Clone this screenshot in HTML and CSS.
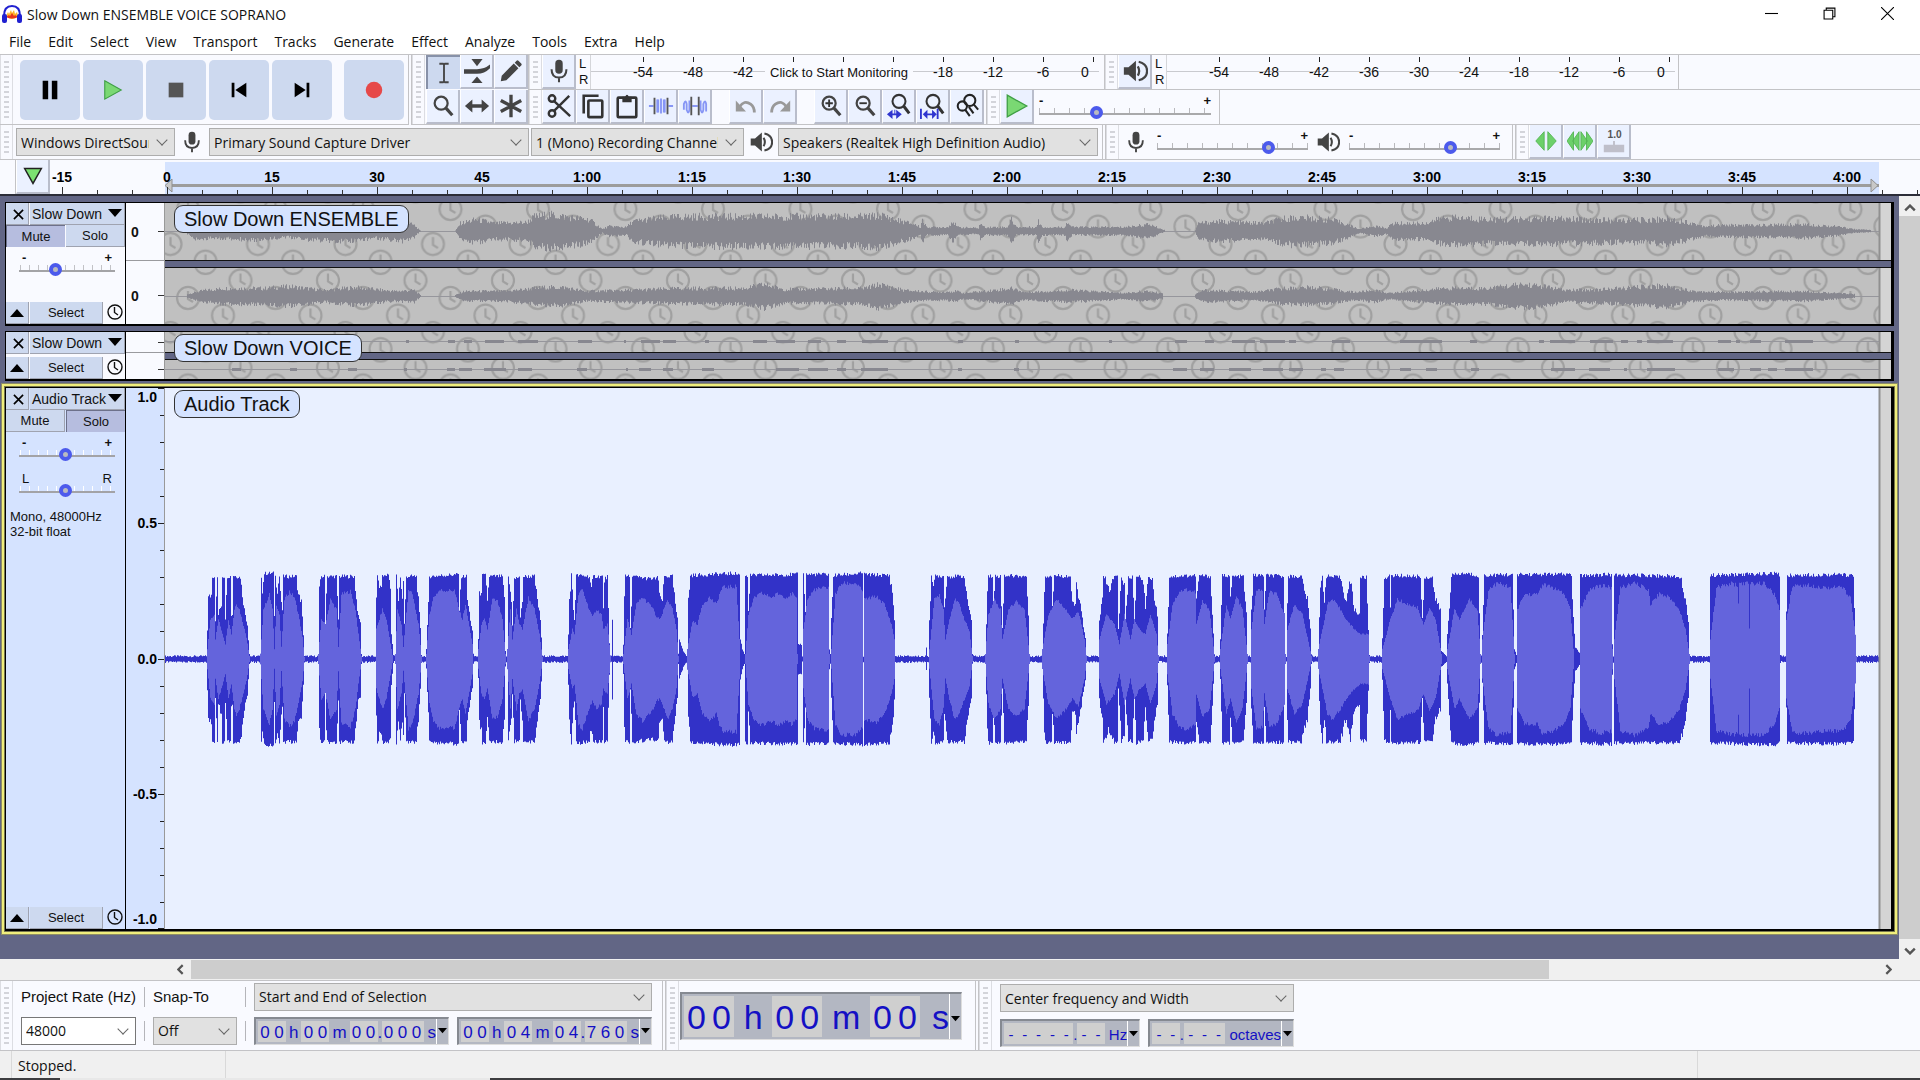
FILE: index.html
```
<!DOCTYPE html>
<html lang="en">
<head>
<meta charset="UTF-8">
<meta name="viewport" content="width=device-width, initial-scale=1">
<title>Slow Down ENSEMBLE VOICE SOPRANO</title>
<link rel="stylesheet" href="styles.css">
</head>
<body>

<!-- icon sprite -->
<svg class="sprite" aria-hidden="true">
  <symbol id="i-pause" viewBox="0 0 24 24"><path d="M4 2h6v20H4zM14 2h6v20h-6z" fill="#000"/></symbol>
  <symbol id="i-play" viewBox="0 0 24 24"><path d="M3 2L21 12 3 22z" fill="#7ad873" stroke="#3f9f45" stroke-width="1.2"/></symbol>
  <symbol id="i-stop" viewBox="0 0 24 24"><path d="M4 4h16v16H4z" fill="#555"/></symbol>
  <symbol id="i-start" viewBox="0 0 24 24"><path d="M4 4h3v16H4zM20 4v16L8 12z" fill="#000"/></symbol>
  <symbol id="i-end" viewBox="0 0 24 24"><path d="M17 4h3v16h-3zM4 4l12 8L4 20z" fill="#000"/></symbol>
  <symbol id="i-record" viewBox="0 0 24 24"><circle cx="12" cy="12" r="9" fill="#e64949"/></symbol>
  <symbol id="i-ibeam" viewBox="0 0 28 28"><path d="M9 4h4l1 1 1-1h4M9 24h4l1-1 1 1h4M14 5v18" fill="none" stroke="#444" stroke-width="2"/></symbol>
  <symbol id="i-envelope" viewBox="0 0 28 28"><path d="M8 1h12l-6 8zM8 27h12l-6-7zM0 12h14q8 0 14-5v4q-6 6-14 6H0z" fill="#444"/></symbol>
  <symbol id="i-pencil" viewBox="0 0 28 28"><path d="M4 19L17 6l5 5L9 24l-6 1zM18 5l2-2q1-1 2 0l3 3q1 1 0 2l-2 2z" fill="#444"/></symbol>
  <symbol id="i-zoom" viewBox="0 0 28 28"><circle cx="12" cy="11" r="7" fill="none" stroke="#444" stroke-width="2.4"/><path d="M17 16l7 8" stroke="#444" stroke-width="3.4"/></symbol>
  <symbol id="i-shift" viewBox="0 0 28 28"><path d="M1 14l8-7v5h10V7l8 7-8 7v-5H9v5z" fill="#444"/></symbol>
  <symbol id="i-multi" viewBox="0 0 28 28"><path d="M14 2v24M3 8l22 12M25 8L3 20" stroke="#444" stroke-width="3.6"/></symbol>
  <symbol id="i-mic" viewBox="0 0 28 28"><rect x="10" y="2" width="8" height="15" rx="4" fill="#444"/><path d="M6 12q0 9 8 9t8-9M14 21v5" fill="none" stroke="#444" stroke-width="2.2"/></symbol>
  <symbol id="i-speaker" viewBox="0 0 28 28"><path d="M2 10h5l8-7v22l-8-7H2z" fill="#444"/><path d="M17 9q3 5 0 10M18 4q9 2 9 10t-9 10" fill="none" stroke="#444" stroke-width="2.4"/></symbol>
  <symbol id="i-cut" viewBox="0 0 28 28"><g fill="none" stroke="#333" stroke-width="2.6"><circle cx="6.5" cy="6" r="3.5"/><circle cx="6.5" cy="22" r="3.5"/><path d="M9 9l17 16M9 19L25 3"/></g></symbol>
  <symbol id="i-copy" viewBox="0 0 28 28"><g fill="none" stroke="#333" stroke-width="2.8"><rect x="9" y="8" width="15" height="18" rx="1"/><path d="M4 22V3h16"/></g></symbol>
  <symbol id="i-paste" viewBox="0 0 28 28"><rect x="4" y="5" width="20" height="21" rx="1" fill="none" stroke="#333" stroke-width="2.8"/><path d="M9 4h3q2-4 4 0h3v6H9z" fill="#333"/></symbol>
  <symbol id="i-trim" viewBox="0 0 28 28"><path d="M1 14h5M22 14h5M11 7v14M14 6v16M17 7v14" stroke="#8796f5" stroke-width="2"/><path d="M7 5v18M21 5v18" stroke="#555" stroke-width="2"/><path d="M9 7h2v14H9zM17 7h2v14h-2z" fill="#8796f5"/></symbol>
  <symbol id="i-silence" viewBox="0 0 28 28"><path d="M2 18v-6q2-6 3 0v6q2 6 3 0V8M20 8v10q2 6 3 0v-6q2-6 3 0v8M11 14h6" fill="none" stroke="#8796f5" stroke-width="2"/><path d="M10 4v20M18 4v20" stroke="#555" stroke-width="2"/></symbol>
  <symbol id="i-undo" viewBox="0 0 28 28"><path d="M7 15q5-8 12-3 4 3 4 9" fill="none" stroke="#999" stroke-width="3"/><path d="M3 8v12h11z" fill="#999"/></symbol>
  <symbol id="i-zoomin" viewBox="0 0 28 28"><use href="#i-zoom"/><path d="M8 11h8M12 7v8" stroke="#333" stroke-width="2"/></symbol>
  <symbol id="i-zoomout" viewBox="0 0 28 28"><use href="#i-zoom"/><path d="M8 11h8" stroke="#333" stroke-width="2"/></symbol>
  <symbol id="i-zoomsel" viewBox="0 0 28 28"><circle cx="14" cy="9" r="7" fill="none" stroke="#333" stroke-width="2.2"/><path d="M19 14l6 8" stroke="#333" stroke-width="3.2"/><path d="M1 23l6-5v4h2v-4h1v4h1v-4l6 5-6 5v-4H7v4z" fill="#2f35cf"/></symbol>
  <symbol id="i-zoomfit" viewBox="0 0 28 28"><circle cx="14" cy="9" r="7" fill="none" stroke="#333" stroke-width="2.2"/><path d="M19 14l6 8" stroke="#333" stroke-width="3.2"/><path d="M0 17h2v11H0zM18 17h2v11h-2zM3 23l5-5v4h5v-4l5 5-5 5v-4H8v4z" fill="#2f35cf"/></symbol>
  <symbol id="i-zoomtog" viewBox="0 0 28 28"><g fill="none" stroke="#222" stroke-width="2.2"><circle cx="17" cy="8" r="6"/><circle cx="9" cy="14" r="5"/><path d="M21 12l5 6M16 15l5 7M12 18l5 7"/></g></symbol>
  <symbol id="i-clock" viewBox="0 0 16 16"><circle cx="8" cy="8" r="7" fill="none" stroke="#111" stroke-width="1.4"/><path d="M7.5 3v5.5L11 11" fill="none" stroke="#111" stroke-width="1.4"/></symbol>
  <symbol id="i-up" viewBox="0 0 14 9"><path d="M0 9L7 1l7 8z"/></symbol>
  <symbol id="i-down" viewBox="0 0 14 9"><path d="M0 0h14L7 8z"/></symbol>
  <symbol id="i-x" viewBox="0 0 12 12"><path d="M1 1l10 10M11 1L1 11" stroke="#000" stroke-width="1.8"/></symbol>
</svg>

<header class="titlebar">
  <svg class="logo" viewBox="0 0 20 18"><path d="M4 11l2-4 1 2 2-4 1 3 2-3 1 4 2-2 1 4q-6 6-12 0z" fill="#ffb52a"/><path d="M4 12l3-2 1 1 2-3 2 3 1-1 3 2q-6 3-12 0z" fill="#e8341c"/><path d="M2 11Q2 1 10 1t8 10" fill="none" stroke="#2020d0" stroke-width="2"/><rect x="0" y="9" width="5" height="9" rx="2" fill="#2020d0"/><rect x="15" y="9" width="5" height="9" rx="2" fill="#2020d0"/></svg>
  <h1>Slow Down ENSEMBLE VOICE SOPRANO</h1>
  <div class="window-buttons">
    <button aria-label="Minimize"><svg viewBox="0 0 12 12"><path d="M0 6h12" stroke="#000"/></svg></button>
    <button aria-label="Restore"><svg viewBox="0 0 12 12"><path d="M1 3h8v8H1zM3 3V1h8v8H9" fill="none" stroke="#000"/></svg></button>
    <button aria-label="Close"><svg viewBox="0 0 12 12"><path d="M0 0l12 12M12 0L0 12" stroke="#000"/></svg></button>
  </div>
</header>

<nav class="menubar">
  <button>File</button><button>Edit</button><button>Select</button><button>View</button><button>Transport</button><button>Tracks</button><button>Generate</button><button>Effect</button><button>Analyze</button><button>Tools</button><button>Extra</button><button>Help</button>
</nav>

<section class="dock">
  <div class="dock-top">
    <div class="bar">
      <i class="grip"></i>
      <div class="transport">
        <button aria-label="Pause"><svg><use href="#i-pause"/></svg></button>
        <button aria-label="Play"><svg><use href="#i-play"/></svg></button>
        <button aria-label="Stop"><svg><use href="#i-stop"/></svg></button>
        <button aria-label="Skip to Start"><svg><use href="#i-start"/></svg></button>
        <button aria-label="Skip to End"><svg><use href="#i-end"/></svg></button>
        <button class="record" aria-label="Record"><svg><use href="#i-record"/></svg></button>
      </div>
    </div>
    <div class="bar">
      <i class="grip"></i>
      <div class="tools">
        <button class="tool on" aria-label="Selection"><svg><use href="#i-ibeam"/></svg></button>
        <button class="tool" aria-label="Envelope"><svg><use href="#i-envelope"/></svg></button>
        <button class="tool" aria-label="Draw"><svg><use href="#i-pencil"/></svg></button>
        <button class="tool" aria-label="Zoom"><svg><use href="#i-zoom"/></svg></button>
        <button class="tool" aria-label="Time Shift"><svg><use href="#i-shift"/></svg></button>
        <button class="tool" aria-label="Multi"><svg><use href="#i-multi"/></svg></button>
      </div>
    </div>
    <div class="dock-rows">
      <div class="dock-row">
        <div class="bar">
          <i class="grip"></i>
          <button class="tool" aria-label="Record Meter"><svg><use href="#i-mic"/></svg></button>
          <div class="lr"><span>L</span><span>R</span></div>
          <div class="meter">
            <span>-54</span><span>-48</span><span>-42</span><span></span><span></span><span></span><span>-18</span><span>-12</span><span>-6</span><span>0</span>
            <button class="monitor">Click to Start Monitoring</button>
          </div>
        </div>
        <div class="bar">
          <i class="grip"></i>
          <button class="tool" aria-label="Playback Meter"><svg><use href="#i-speaker"/></svg></button>
          <div class="lr"><span>L</span><span>R</span></div>
          <div class="meter">
            <span>-54</span><span>-48</span><span>-42</span><span>-36</span><span>-30</span><span>-24</span><span>-18</span><span>-12</span><span>-6</span><span>0</span>
          </div>
        </div>
      </div>
      <div class="dock-row">
        <div class="bar">
          <i class="grip"></i>
          <button class="tool" aria-label="Cut"><svg><use href="#i-cut"/></svg></button>
          <button class="tool" aria-label="Copy"><svg><use href="#i-copy"/></svg></button>
          <button class="tool" aria-label="Paste"><svg><use href="#i-paste"/></svg></button>
          <button class="tool" aria-label="Trim"><svg><use href="#i-trim"/></svg></button>
          <button class="tool" aria-label="Silence"><svg><use href="#i-silence"/></svg></button>
          <button class="tool apart" aria-label="Undo"><svg><use href="#i-undo"/></svg></button>
          <button class="tool redo" aria-label="Redo"><svg><use href="#i-undo"/></svg></button>
          <button class="tool apart" aria-label="Zoom In"><svg><use href="#i-zoomin"/></svg></button>
          <button class="tool" aria-label="Zoom Out"><svg><use href="#i-zoomout"/></svg></button>
          <button class="tool" aria-label="Fit Selection"><svg><use href="#i-zoomsel"/></svg></button>
          <button class="tool" aria-label="Fit Project"><svg><use href="#i-zoomfit"/></svg></button>
          <button class="tool" aria-label="Zoom Toggle"><svg><use href="#i-zoomtog"/></svg></button>
        </div>
        <div class="bar speed">
          <i class="grip"></i>
          <button class="tool" aria-label="Play-at-Speed"><svg><use href="#i-play"/></svg></button>
          <div class="slider wide"><span>-</span><span>+</span><input type="range" aria-label="Playback Speed" min="0" max="100" value="32"></div>
        </div>
      </div>
    </div>
  </div>

  <div class="dock-row devices">
    <div class="bar device-bar">
      <i class="grip"></i>
      <div class="pick host"><select aria-label="Audio Host"><option>Windows DirectSound</option></select></div>
      <svg class="glyph"><use href="#i-mic"/></svg>
      <div class="pick device"><select aria-label="Recording Device"><option>Primary Sound Capture Driver</option></select></div>
      <div class="pick channels"><select aria-label="Recording Channels"><option>1 (Mono) Recording Channel</option></select></div>
      <svg class="glyph"><use href="#i-speaker"/></svg>
      <div class="pick device"><select aria-label="Playback Device"><option>Speakers (Realtek High Definition Audio)</option></select></div>
    </div>
    <div class="bar mixer">
      <i class="grip"></i>
      <svg class="glyph"><use href="#i-mic"/></svg>
      <div class="slider"><span>-</span><span>+</span><input type="range" aria-label="Recording Volume" min="0" max="100" value="76"></div>
      <svg class="glyph"><use href="#i-speaker"/></svg>
      <div class="slider"><span>-</span><span>+</span><input type="range" aria-label="Playback Volume" min="0" max="100" value="69"></div>
    </div>
    <div class="bar scrub">
      <i class="grip"></i>
      <button class="tool" aria-label="Scrub"><svg viewBox="0 0 28 28"><path d="M12 4v20L3 14zM16 4v20l9-10z" fill="#6cd06a" stroke="#55b555"/></svg></button>
      <button class="tool" aria-label="Seek"><svg viewBox="0 0 28 28"><path d="M7 4v20L0 14zM13 4v20L6 14zM15 4v20l7-10zM21 4v20l7-10z" fill="#6cd06a" stroke="#55b555"/></svg></button>
      <button class="tool" aria-label="Scrub Ruler"><svg viewBox="0 0 28 28"><path d="M3 18h22v8H3zM13 14h2v5h-2z" fill="#bfbfca"/><text x="7" y="11" class="tiny">1.0</text></svg></button>
    </div>
  </div>
</section>

<div class="timeline">
  <i class="timeline-edge"></i>
  <button class="tool pin" aria-label="Pin Play Head"><svg viewBox="0 0 28 28"><path d="M5 6h18l-9 16z" fill="#7be071" stroke="#222" stroke-width="1.6"/></svg></button>
  <svg class="ruler" id="ruler"></svg>
</div>

<main class="workspace">
  <div class="tracks">
    <article class="track muted ensemble">
      <div class="panel">
        <div class="panel-head"><button class="close" aria-label="Close"><svg><use href="#i-x"/></svg></button><button class="name">Slow Down<svg><use href="#i-down"/></svg></button></div>
        <div class="panel-mute"><button class="on">Mute</button><button>Solo</button></div>
        <div class="slider gain"><span>-</span><span>+</span><input type="range" aria-label="Gain" min="0" max="100" value="36"></div>
        <div class="panel-foot"><button class="fold" aria-label="Collapse"><svg><use href="#i-up"/></svg></button><button class="select">Select</button><svg class="sync"><use href="#i-clock"/></svg></div>
      </div>
      <div class="scale"><div><b>0</b></div><div><b>0</b></div></div>
      <div class="clip">
        <svg class="wave" data-wave="ensembleL"></svg>
        <svg class="wave" data-wave="ensembleR"></svg>
        <span class="clip-name">Slow Down ENSEMBLE</span>
      </div>
    </article>

    <article class="track muted voice">
      <div class="panel">
        <div class="panel-head"><button class="close" aria-label="Close"><svg><use href="#i-x"/></svg></button><button class="name">Slow Down<svg><use href="#i-down"/></svg></button></div>
        <div class="panel-foot"><button class="fold" aria-label="Collapse"><svg><use href="#i-up"/></svg></button><button class="select">Select</button><svg class="sync"><use href="#i-clock"/></svg></div>
      </div>
      <div class="scale"><div></div><div></div></div>
      <div class="clip">
        <svg class="wave" data-wave="voiceL"></svg>
        <svg class="wave" data-wave="voiceR"></svg>
        <span class="clip-name">Slow Down VOICE</span>
      </div>
    </article>

    <article class="track focused">
      <div class="panel">
        <div class="panel-head"><button class="close" aria-label="Close"><svg><use href="#i-x"/></svg></button><button class="name">Audio Track<svg><use href="#i-down"/></svg></button></div>
        <div class="panel-mute"><button>Mute</button><button class="on">Solo</button></div>
        <div class="slider gain"><span>-</span><span>+</span><input type="range" aria-label="Gain" min="0" max="100" value="48"></div>
        <div class="slider pan"><span>L</span><span>R</span><input type="range" aria-label="Pan" min="0" max="100" value="48"></div>
        <p class="format">Mono, 48000Hz<br>32-bit float</p>
        <div class="panel-foot"><button class="fold" aria-label="Collapse"><svg><use href="#i-up"/></svg></button><button class="select">Select</button><svg class="sync"><use href="#i-clock"/></svg></div>
      </div>
      <svg class="scale" id="scale"></svg>
      <div class="clip">
        <svg class="wave" data-wave="soprano"></svg>
        <span class="clip-name">Audio Track</span>
      </div>
    </article>
  </div>
  <div class="vscroll">
    <button aria-label="Scroll up"><svg viewBox="0 0 10 6"><path d="M1 5l4-4 4 4"/></svg></button>
    <i></i>
    <button aria-label="Scroll down"><svg viewBox="0 0 10 6"><path d="M1 1l4 4 4-4"/></svg></button>
  </div>
</main>

<div class="hscroll">
  <button aria-label="Scroll left"><svg viewBox="0 0 6 10"><path d="M5 1L1 5l4 4"/></svg></button>
  <i></i>
  <button aria-label="Scroll right"><svg viewBox="0 0 6 10"><path d="M1 1l4 4-4 4"/></svg></button>
</div>

<section class="selection-dock">
  <div class="bar">
    <i class="grip"></i>
    <div class="selection">
      <label for="rate">Project Rate (Hz)</label><i class="rule"></i><label for="snap">Snap-To</label><i class="rule"></i>
      <div class="pick range"><select aria-label="Selection Range"><option>Start and End of Selection</option></select></div>
      <div class="pick rate"><select id="rate"><option>48000</option></select></div><i class="rule"></i>
      <div class="pick"><select id="snap"><option>Off</option></select></div><i class="rule"></i>
      <div class="time" data-time="00 h 00 m 00.000 s"></div>
      <div class="time" data-time="00 h 04 m 04.760 s"></div>
    </div>
  </div>
  <div class="bar">
    <i class="grip"></i>
    <div class="time big" data-time="00 h 00 m 00 s"></div>
  </div>
  <div class="bar">
    <i class="grip"></i>
    <div class="spectral">
      <div class="pick"><select aria-label="Spectral Selection"><option>Center frequency and Width</option></select></div>
      <div class="time" data-time="-----.-- Hz"></div>
      <div class="time" data-time="--.--- octaves"></div>
    </div>
  </div>
</section>

<footer class="status">
  <span>Stopped.</span>
  <span></span>
  <span></span>
</footer>
<div class="screen-edge"></div>

<script src="app.js"></script>
</body>
</html>
```

FILE: styles.css
```
:root {
  --toolbar: #f9faff;
  --line: #c3c3c6;
  --button: #ebf1ff;
  --button-down: #cdd9ef;
  --selected: #d5e3ff;
  --backdrop: #626685;
  --ui: "Open Sans", "Noto Sans", sans-serif;
  --panel-font: "Liberation Sans", Arial, sans-serif;
}

* {
  box-sizing: border-box;
}

body {
  margin: 0;
  min-height: 100vh;
  display: flex;
  flex-direction: column;
  background: #fff;
  color: #111;
  font-family: var(--ui);
  font-size: 14px;
}

button, select, input {
  font: inherit;
  color: inherit;
}

button {
  border: 0;
  padding: 0;
  background: none;
}

.sprite {
  position: absolute;
  width: 0;
  height: 0;
}

/* title and menu */
.titlebar {
  display: flex;
  align-items: center;
  height: 28px;
  padding: 0 4px 0 2px;
}

.logo {
  width: 20px;
  height: 18px;
  margin-right: 5px;
}

.titlebar h1 {
  margin: 0;
  font-size: 14px;
  font-weight: 400;
}

.window-buttons {
  display: flex;
  margin-left: auto;
}

.window-buttons button {
  width: 58px;
  height: 28px;
}

.window-buttons svg {
  width: 13px;
  height: 13px;
}

.menubar {
  display: flex;
  gap: 17px;
  height: 26px;
  padding-left: 9px;
}

/* toolbars */
.dock {
  background: var(--toolbar);
  border-top: 1px solid var(--line);
}

.dock-top, .dock-row, .bar {
  display: flex;
}

.dock-top {
  height: 70px;
}

.dock-rows {
  flex: 1;
}

.dock-row {
  height: 35px;
  border-bottom: 1px solid var(--line);
}

.bar {
  align-items: center;
  border-right: 1px solid var(--line);
}

.bar + .bar {
  border-left: 1px solid var(--line);
  margin-left: 2px;
}

.dock-rows .dock-row .bar:first-child {
  border-right: 0;
}

.dock-top > .bar {
  height: 69px;
  box-shadow: 0 1px var(--line);
}

.grip {
  align-self: stretch;
  flex: none;
  width: 13px;
  border: solid #dcdde2;
  border-width: 0 1px;
  background: repeating-linear-gradient(#d3d4da 0 2px, transparent 2px 5px) content-box;
  padding: 6px 3px 5px;
}

.transport {
  display: flex;
  gap: 3px;
  padding: 0 4px 0 7px;
}

.transport button {
  width: 60px;
  height: 60px;
  border-radius: 5px;
  background: var(--button-down);
}

.transport svg {
  width: 22px;
  height: 22px;
  vertical-align: middle;
}

.transport .record {
  margin-left: 9px;
}

.tools {
  display: grid;
  grid-template-columns: repeat(3, 34px);
  row-gap: 1px;
  padding-left: 1px;
}

.tool {
  flex: none;
  width: 34px;
  height: 34px;
  background: var(--button);
  border-right: 2px solid #b9bdcb;
  border-bottom: 2px solid #b9bdcb;
  border-left: 1px solid #fff;
}

.tool.on {
  background: var(--button-down);
  border: solid #8791a8;
  border-width: 2px 0 0 2px;
}

.tool svg {
  width: 26px;
  height: 26px;
  vertical-align: middle;
}

.tool.apart {
  margin-left: 17px;
}

.tool.redo svg {
  transform: scaleX(-1);
}

.lr {
  display: flex;
  flex-direction: column;
  width: 14px;
  padding-left: 3px;
  font: 13px/16px var(--panel-font);
}

.meter {
  position: relative;
  display: flex;
  align-self: stretch;
  width: 512px;
  padding-left: 27px;
  border-left: 1px solid #d5d6da;
  background: linear-gradient(#c9cacf, #c9cacf) 0 16px / 508px 1px no-repeat;
  font: 14px/18px var(--panel-font);
}

.meter span {
  flex: none;
  width: 50px;
  padding-top: 8px;
  text-align: center;
  background: linear-gradient(#222, #222) 25px 2px / 1px 5px no-repeat;
}

.meter span:last-of-type {
  width: 34px;
}

.monitor {
  position: absolute;
  left: 174px;
  top: 9px;
  width: 148px;
  height: 17px;
  background: var(--toolbar);
  font: 13px/17px var(--panel-font);
}

.slider {
  display: grid;
  grid-template-columns: 1fr 1fr;
  width: 151px;
  font: bold 13px/12px var(--panel-font);
}

.slider span:nth-child(2) {
  text-align: right;
}

.slider input {
  grid-column: 1 / 3;
  appearance: none;
  width: 100%;
  height: 13px;
  margin: -1px 0 0;
  background:
    linear-gradient(#a9a9ab, #a9a9ab) 0 7px / 100% 2px no-repeat,
    repeating-linear-gradient(90deg, #b9b9bd 0 1px, transparent 1px 15px) 0 2px / 100% 5px no-repeat;
}

.slider.wide {
  width: 172px;
}

.slider input::-webkit-slider-thumb {
  appearance: none;
  width: 13px;
  height: 13px;
  border: 4px solid #4c5aec;
  border-radius: 50%;
  background: #b9bac0;
}

.speed .slider {
  margin: 0 8px 0 5px;
}

.devices {
  height: 35px;
}

.device-bar {
  padding-right: 4px;
}

.glyph {
  flex: none;
  width: 24px;
  height: 24px;
  margin: 0 5px;
}

.pick {
  position: relative;
  height: 28px;
}

.pick select {
  appearance: none;
  width: 100%;
  height: 100%;
  padding: 0 25px 0 4px;
  border: 1px solid #adadad;
  border-radius: 0;
  background: #e1e1e1;
}

.pick::after {
  content: "";
  position: absolute;
  right: 9px;
  top: 8px;
  width: 7px;
  height: 7px;
  border: solid #666;
  border-width: 0 1px 1px 0;
  transform: rotate(45deg);
}

.host {
  width: 159px;
  margin-left: 3px;
}

.device {
  width: 320px;
}

.channels {
  width: 213px;
  margin-left: 2px;
}

.mixer .slider {
  margin: 0 3px 0 4px;
}

.mixer {
  padding-right: 9px;
}

.scrub {
  border-right: 0;
}

.tiny {
  font: bold 11px var(--panel-font);
  fill: #555;
}

/* time ruler */
.timeline {
  display: flex;
  height: 36px;
  background: var(--toolbar);
  border-bottom: 2px solid #2c2d38;
}

.timeline-edge {
  width: 16px;
  border-right: 1px solid var(--line);
}

.pin svg {
  width: 28px;
  height: 26px;
}

.ruler {
  flex: 1;
  height: 34px;
  font: bold 14px var(--panel-font);
}

/* tracks */
.workspace {
  flex: 1;
  display: flex;
  background: var(--backdrop);
}

.tracks {
  flex: 1;
  display: flex;
  flex-direction: column;
  gap: 5px;
  padding: 6px 5px 28px;
  font-family: var(--panel-font);
  font-size: 13px;
}

.track {
  display: flex;
  border: solid #000;
  border-width: 1px 3px 2px 1px;
  background: var(--toolbar);
}

.ensemble {
  height: 124px;
}

.voice {
  height: 50px;
}

.focused {
  flex: 1;
  min-height: 200px;
  margin-top: 1px;
  background: var(--selected);
  box-shadow: 0 0 0 1px #77774e, 0 0 0 3px #f0ee7c, 0 0 0 4px #8d8d66;
}

.panel {
  display: flex;
  flex-direction: column;
  width: 120px;
  border-right: 1px solid #000;
}

.panel button {
  background: var(--button-down);
  border: solid #9fa3b0;
  border-width: 0 1px 1px 0;
}

.panel-head, .panel-mute, .panel-foot {
  display: flex;
  gap: 1px;
  height: 22px;
}

.panel-head .close, .panel-foot .fold {
  width: 23px;
}

.close svg {
  width: 11px;
  height: 11px;
  margin-left: 2px;
  vertical-align: middle;
}

.panel-head .name {
  flex: 1;
  display: flex;
  align-items: center;
  justify-content: space-between;
  padding: 0 2px;
  font-size: 14px;
  white-space: nowrap;
}

.name svg, .fold svg {
  flex: none;
  width: 14px;
  height: 9px;
}

.panel-mute button {
  flex: 1;
}

.panel-mute .on {
  background: #b6bddf;
  border-width: 1px 0 0 1px;
  border-color: #6d718a;
}

.panel .slider {
  width: 96px;
  margin: 5px 0 0 13px;
}

.panel .slider span {
  padding: 0 3px;
}

.panel .slider.pan {
  margin-top: 12px;
  font-weight: 400;
}

.panel .slider input {
  background:
    linear-gradient(#a3a3a6, #a3a3a6) 0 7px / 100% 2px no-repeat,
    repeating-linear-gradient(90deg, #c2c2c6 0 1px, transparent 1px 9px) 1px 2px / 93px 5px no-repeat;
}

.focused .slider input {
  background:
    linear-gradient(#a3a3a6, #a3a3a6) 0 7px / 100% 2px no-repeat,
    repeating-linear-gradient(90deg, #fff 0 1px, transparent 1px 9px) 1px 2px / 93px 5px no-repeat;
}

.format {
  margin: 12px 0 0 4px;
  line-height: 15px;
}

.panel-foot {
  margin-top: auto;
}

.panel-foot .select {
  width: 73px;
}

.sync {
  width: 16px;
  height: 16px;
  margin: 2px 0 0 3px;
}

.scale {
  display: flex;
  flex-direction: column;
  width: 39px;
  height: 100%;
  border-right: 1px solid #999;
  font-size: 14px;
}

div.scale {
  gap: 6px;
}

.scale div {
  flex: 1;
  display: flex;
  align-items: center;
  padding-left: 5px;
  background: linear-gradient(#333, #333) right center / 6px 1px no-repeat;
}

.scale div:first-child {
  border-bottom: 1px solid #9a9a9e;
}

.clip {
  position: relative;
  flex: 1;
  display: flex;
  flex-direction: column;
  gap: 6px;
  background: var(--backdrop);
}

.wave {
  flex: 1;
  display: block;
  width: 100%;
  min-height: 0;
}

.wave + .wave {
  border-top: 1px solid #111;
}

.wave:has(+ .wave) {
  border-bottom: 1px solid #111;
}

.clip-name {
  position: absolute;
  left: 9px;
  top: 2px;
  padding: 0 9px;
  border: 1px solid #333;
  border-radius: 9px;
  background: var(--selected);
  font-size: 20px;
  line-height: 26px;
}

/* scrollbars */
.vscroll {
  display: flex;
  flex-direction: column;
  width: 21px;
  background: #f0f0f0;
}

.vscroll button {
  height: 20px;
}

.vscroll i, .hscroll i {
  flex: 1;
  background: #cdcdcd;
}

.vscroll svg {
  width: 12px;
  height: 8px;
}

.vscroll svg, .hscroll svg {
  fill: none;
  stroke: #555;
  stroke-width: 2;
}

.hscroll {
  display: flex;
  height: 21px;
  padding: 1px 21px 1px 170px;
  background: #f0f0f0;
}

.hscroll button {
  width: 21px;
}

.hscroll svg {
  width: 7px;
  height: 11px;
}

.hscroll i {
  margin-right: 329px;
}

/* selection toolbars */
.selection-dock {
  display: flex;
  height: 71px;
  background: var(--toolbar);
  border: solid var(--line);
  border-width: 1px 0;
}

.selection-dock .bar:last-child {
  border-right: 0;
}

.selection {
  display: grid;
  grid-template-columns: 115px 1px 84px 1px 195px 195px;
  grid-template-rows: 28px 28px;
  gap: 6px 8px;
  padding: 0 10px 4px 8px;
  align-items: center;
}

.selection label {
  font: 15px/28px var(--panel-font);
  white-space: nowrap;
}

.rule {
  height: 20px;
  background: #b5b5ba;
}

.range {
  grid-column: 5 / 7;
}

.rate select {
  background: #fff;
  border-color: #777;
}

.time {
  display: flex;
  height: 28px;
  padding: 2px 0 2px 2px;
  border: solid #858991;
  border-width: 2px 1px 1px 2px;
  border-right-color: #ddd;
  border-bottom-color: #ddd;
  background: #b3b7c2;
  color: #1410c4;
  font: 17px/24px var(--panel-font);
}

.time .digit {
  width: 14px;
  background: #cfcfcf;
  text-align: center;
}

.time .unit {
  flex: 1 1 auto;
  text-align: center;
}

.time .unit.last {
  flex: 0 1 auto;
  margin-left: auto;
  padding-left: 4px;
  text-align: right;
}

.time .point {
  width: 4px;
}

.time button {
  width: 12px;
  margin: -2px 0;
  border-left: 1px solid #fff;
  line-height: 0;
}

.time button svg {
  width: 9px;
  height: 6px;
  fill: #000;
}

.time.big {
  width: 282px;
  height: 48px;
  margin: 0 13px 0 1px;
  font-size: 34px;
  line-height: 43px;
}

.big .digit {
  width: 25px;
}

.big .unit.last {
  padding-left: 12px;
}

.spectral {
  display: grid;
  grid-template-columns: 140px 146px;
  gap: 7px 8px;
  padding-left: 8px;
}

.spectral .pick {
  grid-column: 1 / 3;
}

.spectral .time {
  font-size: 15px;
}

/* status bar */
.status {
  display: flex;
  height: 27px;
  margin-left: 11px;
  background: #f0f0f0;
  line-height: 30px;
  box-shadow: -11px 0 #f0f0f0;
}

.status span {
  padding-left: 6px;
  border-left: 1px solid #d9d9d9;
}

.status span:first-child {
  width: 214px;
}

.status span:nth-child(2) {
  flex: 1;
}

.status span:last-child {
  width: 223px;
}

.screen-edge {
  height: 2px;
  background: linear-gradient(90deg, #3d3d40 60px, #e8e8e8 60px 490px, #3d3d40 490px);
}
```

FILE: app.js
```
// Envelopes are "x,height" pairs in pixels from the start of the clip, one group per phrase.
const envelopes = {
  ensembleL: {
    peak: '23,3 30,8 55,7 90,9 120,6 150,9 185,10 210,7 240,10 250,6 256,0 | 291,0 296,8 312,12 330,8 362,9 370,15 386,17 400,15 425,12 438,2 445,5 462,4 468,10 490,13 520,15 570,15 620,15 700,15 718,16 730,12 750,7 756,4 758,12 762,4 784,4 788,11 793,4 814,3 816,8 820,4 843,4 847,12 852,4 872,4 874,10 878,4 900,4 903,9 908,4 960,4 985,7 1000,1 | 1031,1 1034,8 1052,10 1100,8 1120,13 1135,14 1165,12 1180,8 1195,2 1210,5 1223,3 1228,8 1260,8 1280,14 1310,13 1340,12 1380,13 1460,11 1490,12 1502,13 1520,10 1540,5 1560,6 1600,6 1640,7 1670,5 1690,2 1706,1'
  },
  ensembleR: {
    peak: '23,2 40,6 60,8 100,8 125,10 160,6 190,9 230,5 250,6 256,1 | 291,1 300,5 340,5 380,9 400,9 420,5 460,6 520,8 580,8 600,12 620,7 700,8 715,12 740,6 770,4 792,5 800,3 848,8 860,4 908,6 960,3 980,5 998,3 | 1031,2 1040,6 1090,4 1120,8 1150,9 1190,4 1210,6 1225,3 1280,8 1320,8 1360,12 1380,10 1400,6 1440,7 1500,11 1530,5 1560,4 1640,5 1690,2'
  },
  voiceL: {
    dashes: '242-245 284-291 300-308 321-340 354-374 414-428 460-462 477-496 499-512 541-545 589-603 612-631 644-657 673-682 698-724 794-799 851-855 945-948 1011-1023 1041-1050 1068-1091 1096-1121 1125-1132 1168-1186 1236-1278 1306-1313 1375-1380 1386-1411 1426-1449 1457-1464 1473-1478 1483-1509 1554-1567 1572-1576 1586-1597 1621-1649'
  },
  voiceR: {
    dashes: '68-77 126-133 184-193 240-243 283-291 295-308 320-342 354-368 413-423 462-464 475-487 499-509 538-550 612-635 644-664 673-682 697-724 794-798 850-855 1009-1023 1036-1050 1065-1087 1099-1119 1125-1139 1157-1162 1170-1180 1236-1247 1262-1273 1307-1315 1387-1411 1425-1446 1460-1463 1483-1511 1554-1570 1586-1597 1604-1613 1621-1649'
  },
  soprano: {
    peak: '43,30 44,62 47,65 48,83 50,83 51,40 53,82 54,45 57,55 58,83 60,83 61,42 63,83 66,83 67,45 68,45 69,84 76,82 78,65 80,50 83,35 84,20 85,5 | 96,5 97,83 98,70 100,86 109,86 110,45 111,83 113,70 115,83 117,55 118,50 119,83 132,83 134,65 137,58 139,25 140,3 | 154,5 155,70 157,83 160,83 161,30 162,70 163,83 172,83 174,40 175,83 190,83 192,60 194,42 196,38 197,5 | 212,60 213,83 216,70 218,83 224,85 226,75 227,25 229,4 | 231,5 232,84 234,60 236,83 238,60 239,80 240,35 242,83 252,83 254,60 256,30 257,4 | 262,10 264,55 265,83 294,85 295,50 297,83 302,83 303,60 306,40 308,28 309,5 | 314,20 315,65 317,70 318,84 321,84 323,60 325,83 338,83 340,60 341,8 | 343,5 344,83 347,60 348,35 350,80 355,83 356,40 358,60 359,83 370,83 373,60 376,40 377,22 378,3 | 404,25 405,60 407,85 409,50 410,40 412,84 425,83 427,70 429,83 438,83 439,50 440,80 443,83 444,50 445,15 446,3 447,3 448,40 449,3 | 459,15 460,65 461,83 465,83 466,30 468,83 490,80 493,83 496,60 498,60 500,83 508,83 511,55 513,40 514,5 515,20 519,8 522,3 | 523,10 524,60 526,84 570,86 575,85 576,20 578,10 580,5 | 581,84 583,84 584,50 586,84 633,85 634,15 637,15 | 639,85 641,50 642,85 664,85 665,10 666,5 | 667,40 669,84 698,86 | 700,85 725,84 727,75 729,55 730,40 | 761,3 762,11 763,3 | 765,40 767,84 769,70 771,84 779,83 780,55 783,83 800,83 802,65 805,50 807,40 808,5 | 821,5 823,70 824,84 828,83 829,50 831,84 836,83 838,30 840,84 862,83 864,45 865,3 | 878,5 880,70 881,83 887,84 888,55 890,84 906,83 908,55 911,55 912,75 915,60 918,40 921,20 922,3 | 935,40 938,60 939,83 945,70 950,83 953,83 954,30 957,83 960,75 961,40 964,80 968,83 970,40 972,84 979,80 981,50 984,83 988,80 990,60 993,45 994,4 | 1003,25 1005,83 1031,84 1032,60 1035,84 1046,83 1048,45 1050,5 | 1056,20 1058,84 1065,84 1066,60 1068,83 1079,83 1082,45 1083,5 | 1087,50 1089,84 1099,84 1100,50 1102,84 1119,83 1121,5 | 1123,60 1124,83 1137,83 1140,70 1143,60 1146,30 1147,5 | 1154,10 1156,70 1158,84 1160,60 1162,83 1176,82 1180,65 1182,60 1186,80 1190,50 1195,45 1196,82 1202,82 1204,30 1205,4 | 1218,20 1220,82 1225,83 1226,50 1227,84 1256,83 1258,40 1260,82 1268,82 1271,60 1276,50 1277,8 1281,4 | 1283,25 1287,84 1300,86 1314,84 1316,5 | 1318,25 1320,84 1348,85 1350,10 1352,4 | 1353,85 1407,85 1409,40 1411,12 1415,6 | 1416,84 1447,85 1448,15 | 1450,84 1485,84 1516,83 1520,65 1524,40 1525,5 | 1546,84 1612,86 1615,84 1616,4 | 1622,50 1623,84 1670,85 1689,84 1690,50 1691,20 1692,3',
    rms: '43,10 46,40 50,45 51,20 54,40 61,15 64,40 67,25 70,50 72,56 75,50 78,38 82,22 85,3 | 96,5 99,50 105,65 108,50 110,10 112,55 115,45 117,12 120,60 125,68 130,62 134,45 138,22 140,2 | 154,5 157,40 161,35 166,60 172,50 174,12 177,65 186,68 191,50 194,25 197,3 | 212,30 218,50 222,40 228,4 | 231,5 233,50 237,35 239,12 244,70 248,65 254,35 257,3 | 262,5 265,45 269,62 275,69 290,69 295,48 298,40 301,55 304,38 308,15 | 314,10 317,35 320,40 323,30 328,60 333,58 338,40 341,5 | 343,10 346,50 348,20 352,50 355,35 358,30 364,62 370,50 375,25 378,2 | 404,10 408,30 410,25 414,65 418,70 423,55 428,42 432,50 437,45 439,30 443,35 446,3 | 459,5 463,40 467,25 472,55 478,62 488,52 492,42 496,40 503,60 508,50 512,30 514,3 | 523,10 528,38 533,35 538,55 545,62 552,55 555,65 558,72 572,73 575,20 | 581,5 584,45 590,62 597,66 608,62 613,66 622,62 628,66 632,60 633,5 | 639,30 643,60 650,70 664,72 665,5 | 667,10 671,65 677,76 692,76 698,68 | 700,60 712,63 720,55 727,35 730,20 | 765,10 770,60 775,65 779,50 781,20 785,40 790,60 795,55 800,40 805,28 808,3 | 821,5 824,45 830,60 836,50 838,20 844,50 852,58 860,50 865,5 | 878,10 884,45 892,60 900,52 908,40 914,48 920,20 922,3 | 935,20 942,45 950,35 955,15 960,45 966,20 970,40 975,30 981,25 986,45 992,25 994,3 | 1003,15 1008,55 1015,68 1022,70 1031,67 1032,35 1038,58 1045,50 1050,3 | 1056,10 1062,55 1066,40 1072,63 1078,50 1083,5 | 1087,30 1092,70 1098,68 1100,35 1105,68 1112,65 1120,45 1121,5 | 1123,30 1130,55 1138,45 1147,3 | 1154,10 1163,55 1168,60 1176,50 1183,38 1190,30 1196,25 1204,25 1205,3 | 1218,10 1226,40 1233,60 1243,55 1253,52 1259,35 1265,52 1271,40 1277,5 | 1283,10 1290,50 1295,40 1305,60 1313,50 1316,5 | 1318,20 1324,70 1332,76 1346,73 1350,5 | 1353,50 1360,65 1373,65 1378,75 1388,72 1400,65 1406,50 1409,10 | 1416,50 1425,70 1435,74 1447,72 1448,10 | 1450,20 1456,72 1470,76 1484,70 1486,55 1495,66 1505,62 1515,50 1521,30 1525,5 | 1546,20 1552,72 1568,76 1573,74 1574,55 1575,76 1584,76 1585,30 1586,76 1600,76 1610,65 1615,50 | 1622,40 1628,74 1645,74 1660,72 1678,72 1686,62 1691,25 1692,3'
  }
};

const CLIP = 1714;      // clip length in pixels
const SECOND = 105 / 15;

function noise(n) {
  const s = Math.sin(n * 12.9898) * 43758.5453;
  return s - Math.floor(s);
}

// one column per pixel, mirrored round the centre line
function columns(text, rough) {
  let d = '';
  text.split('|').forEach(group => {
    const pts = group.trim().split(/\s+/).map(p => p.split(',').map(Number));
    let k = 0;
    for (let x = pts[0][0]; x <= pts[pts.length - 1][0]; x++) {
      while (k < pts.length - 2 && x > pts[k + 1][0]) k++;
      const [x0, h0] = pts[k], [x1, h1] = pts[k + 1];
      const h = h0 + (h1 - h0) * (x - x0) / (x1 - x0);
      const up = Math.max(.5, h + (noise(x) - .6) * rough(h));
      const down = Math.max(.5, h + (noise(x + 999) - .5) * rough(h));
      d += `M${x} ${-up.toFixed(1)}h1V${down.toFixed(1)}h-1z`;
    }
  });
  return d;
}

function clocks(id, top) {
  let marks = '';
  for (let i = -1; i < 6; i++) {
    // each row of clocks is shifted 35px along from the one above
    for (let j = -3; j < 4; j++) {
      const x = 23 + i * 35 - j * 87.5, y = 7 + i * 17.5;
      if (x > -20 && x < 110) marks += `<g transform="translate(${x} ${y})"><circle r="11"/><path d="M0 -7V1L5 4"/></g>`;
    }
  }
  return `<pattern id="${id}" width="87.5" height="87.5" y="${-top}" patternUnits="userSpaceOnUse"><g fill="none" stroke="#a0a0a0" stroke-width="2.2">${marks}</g></pattern>`;
}

function drawWaves() {
  document.querySelectorAll('.wave').forEach(svg => {
    const name = svg.dataset.wave, data = envelopes[name];
    const w = svg.clientWidth, h = svg.clientHeight;
    const clip = w - 12;
    const muted = name !== 'soprano';
    const mid = Math.round(h / 2) - (muted ? 1 : 0);
    const fit = `translate(-1 ${mid}) scale(${clip / CLIP} 1)`;
    let out = `<rect width="${clip}" height="${h}" fill="${muted ? '#c0c0c0' : '#e9f0ff'}"/>`;
    if (muted) {
      const top = svg.getBoundingClientRect().top - 202;
      out += clocks('clocks-' + name, top) + `<rect width="${clip}" height="${h}" fill="url(#clocks-${name})"/>`;
      out += `<path d="M0 ${mid}.5h${clip}" stroke="#96969c"/>`;
      out += `<g transform="${fit}" fill="#888890">`;
      if (data.peak) out += `<path d="${columns(data.peak, v => v * .55)}"/>`;
      if (data.dashes) out += data.dashes.split(' ').map(r => {
        const [a, b] = r.split('-').map(Number);
        return `<rect x="${a}" y="-1" width="${b - a}" height="3"/>`;
      }).join('');
      out += '</g>';
    } else {
      out += `<g transform="${fit}"><path fill="#3232c8" d="${columns(`1,3 ${CLIP},3`, () => 2)}${columns(data.peak, v => v > 80 ? 4 : v * .12)}"/><path fill="#6464dc" d="${columns(data.rms, v => v * .06)}"/></g>`;
    }
    out += `<rect x="${clip}" width="12" height="${h}" fill="#d4d4d4"/><path d="M${clip}.5 0v${h}" stroke="#909090" stroke-width="2"/>`;
    svg.innerHTML = out;
  });
}

function drawRuler() {
  const svg = document.getElementById('ruler');
  const w = svg.clientWidth, zero = 117;
  const end = w - 41;
  let out = `<rect x="${zero - 2}" y="2" width="${end - zero + 2}" height="32" fill="#d5e3ff"/><path d="M${zero} 25.5H${end}" stroke="#9c9c9c" stroke-width="3"/>`;
  out += `<path d="M${zero + 5} 19v13l-7-6.5zM${end - 8} 19v13l7-6.5z" fill="#c8c8c8" stroke="#909090"/>`;
  for (let t = -15; zero + t * SECOND < w; t += 5) {
    const x = Math.round(zero + t * SECOND);
    const major = t % 15 === 0;
    out += `<path d="M${x}.5 ${major ? 27 : 30}V34" stroke="#333"/>`;
    if (!major || x > end) continue;
    const label = t < 60 ? t : Math.floor(t / 60) + ':' + String(t % 60).padStart(2, '0');
    out += `<text x="${x}" y="22" text-anchor="middle">${label}</text>`;
  }
  svg.innerHTML = out;
}

function drawScale() {
  const svg = document.getElementById('scale');
  const h = svg.clientHeight;
  let out = '';
  for (let i = 0; i <= 20; i++) {
    const y = Math.min(h - 1, Math.round(h * i / 20));
    out += `<path d="M${i % 5 ? 34 : 32} ${y}.5H39" stroke="#222"/>`;
    if (i % 5) continue;
    const base = Math.min(h - 5, Math.max(14, y + 5));
    out += `<text x="31" y="${base}" text-anchor="end" font-weight="bold">${(1 - i / 10).toFixed(1)}</text>`;
  }
  svg.innerHTML = out;
}

function fillTimes() {
  document.querySelectorAll('.time').forEach(el => {
    const text = el.dataset.time.replace(/ /g, '');
    const parts = text.match(/[0-9-]|\.|[A-Za-z]+/g);
    el.innerHTML = parts.map((p, i) => {
      if (p === '.') return '<span class="point">.</span>';
      if (/[0-9-]/.test(p)) return `<span class="digit">${p}</span>`;
      return `<span class="unit${i === parts.length - 1 ? ' last' : ''}">${p}</span>`;
    }).join('') + '<button aria-label="Format"><svg><use href="#i-down"/></svg></button>';
  });
}

function draw() {
  drawRuler();
  drawScale();
  drawWaves();
}

fillTimes();
draw();
window.addEventListener('resize', draw);
```
